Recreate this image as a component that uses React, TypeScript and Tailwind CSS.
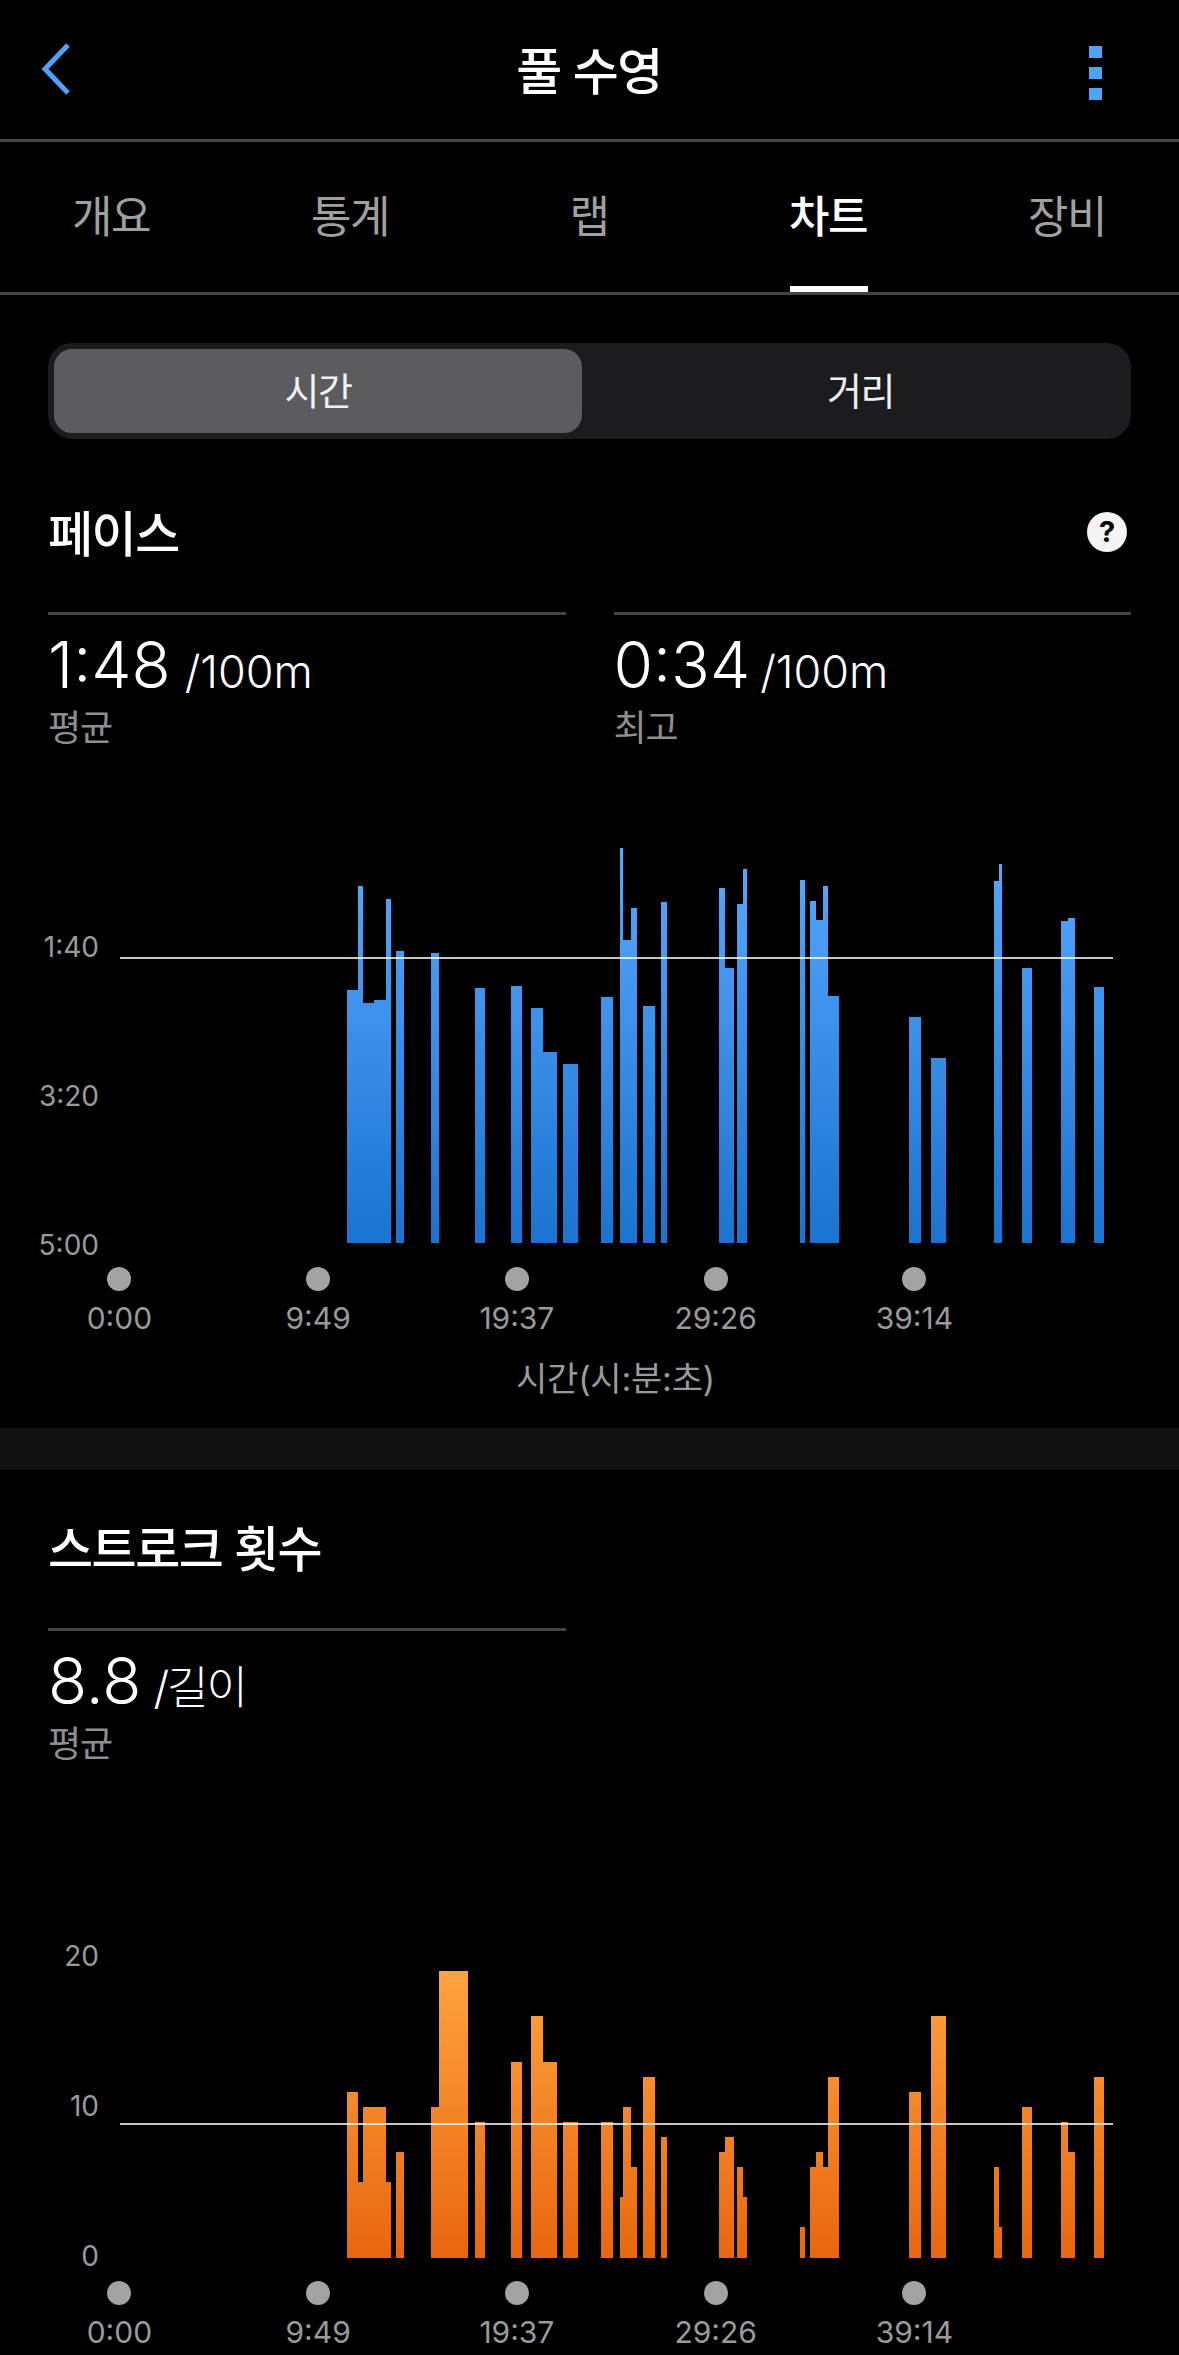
import React from "react";

const FONT = 'Inter, "Noto Sans CJK KR", sans-serif';

type Bar = [number, number, number];

const paceBars: Bar[] = [
  [347, 358, 480], [358, 363, 168], [363, 374, 519], [374, 386, 510], [386, 391, 207],
  [396, 404, 363], [431, 439, 369], [475, 485, 474], [511, 522, 468], [531, 543, 534],
  [543, 557, 666], [563, 578, 702], [601, 613, 501], [620, 623, 54], [623, 631, 330],
  [631, 637, 234], [643, 655, 528], [661, 667, 216], [719, 725, 174], [725, 734, 414],
  [737, 743, 222], [743, 747, 117], [800, 805, 150], [810, 816, 213], [816, 823, 270],
  [823, 828, 168], [828, 839, 498], [909, 921, 561], [931, 946, 684], [994, 999, 153],
  [999, 1002, 102], [1022, 1032, 414], [1061, 1068, 273], [1068, 1075, 264], [1094, 1104, 471],
];

const strokeBars: Bar[] = [
  [347, 358, 426], [358, 363, 696], [363, 386, 471], [386, 391, 696], [396, 404, 606],
  [431, 439, 471], [439, 468, 63], [475, 485, 516], [511, 522, 336], [531, 543, 198],
  [543, 557, 336], [563, 578, 516], [601, 613, 516], [620, 623, 741], [623, 631, 471],
  [631, 637, 651], [643, 655, 381], [661, 667, 561], [719, 725, 606], [725, 734, 561],
  [737, 743, 651], [743, 747, 741], [800, 805, 831], [810, 816, 651], [816, 823, 606],
  [823, 828, 651], [828, 839, 381], [909, 921, 426], [931, 946, 198], [994, 999, 651],
  [999, 1002, 831], [1022, 1032, 471], [1061, 1068, 516], [1068, 1075, 606], [1094, 1104, 381],
];

function BarChart({
  id, bars, originY, height, zeroZ, baseY, lineY, from, to, gradTop, gradBottom, labels, labelPad, labelGap,
}: {
  id: string; bars: Bar[]; originY: number; height: number; zeroZ: number; baseY: number; lineY: number;
  from: string; to: string; gradTop: number; gradBottom: number; labels: string[]; labelPad: string; labelGap: string;
}) {
  const left = 120;
  return (
    <div className="flex">
      <div className={`w-[120px] shrink-0 flex flex-col items-end pr-[21px] text-[28px] leading-[44px] text-[#9a9a9a] ${labelPad} ${labelGap}`}>
        {labels.map((l) => (
          <span key={l}>{l}</span>
        ))}
      </div>
      <svg width={1059} height={height} viewBox={`${left} ${originY} 1059 ${height}`} shapeRendering="crispEdges">
        <defs>
          <linearGradient id={id} gradientUnits="userSpaceOnUse" x1="0" x2="0" y1={gradTop} y2={gradBottom}>
            <stop offset="0" stopColor={from} />
            <stop offset="1" stopColor={to} />
          </linearGradient>
        </defs>
        {bars.map(([x0, x1, z]) => {
          const y = zeroZ + z / 3;
          return <rect key={`${x0}-${x1}`} x={x0} y={y} width={x1 - x0} height={baseY - y} fill={`url(#${id})`} />;
        })}
        <rect x={120} y={lineY} width={993} height={2} fill="#ffffff" fillOpacity={0.78} />
      </svg>
    </div>
  );
}

function XAxis({ title }: { title?: boolean }) {
  const ticks = ["0:00", "9:49", "19:37", "29:26", "39:14"];
  return (
    <div>
      <div className="flex pl-[20px]">
        {ticks.map((t) => (
          <div key={t} className="w-[198.75px] flex flex-col items-center">
            <div className="w-[24px] h-[24px] rounded-full bg-[#a3a3a3]" />
            <div className="mt-[7px] text-[30px] leading-[40px] text-[#9a9a9a]">{t}</div>
          </div>
        ))}
      </div>
      {title && (
        <div className="mt-[19px] pl-[516px] text-[34px] leading-[44px] text-[#9a9a9a] tracking-[-0.2px]">시간(시:분:초)</div>
      )}
    </div>
  );
}

function Stat({ value, unit, label, unitClass }: { value: string; unit: string; label: string; unitClass: string }) {
  return (
    <div className="w-[518px]">
      <div className="h-[3px] bg-[#454545]" />
      <div className="mt-[10px] flex items-baseline h-[80px] text-white">
        <span className="text-[64px] leading-[80px] font-light">{value}</span>
        <span className={`text-[45px] leading-[80px] font-light ${unitClass}`}>{unit}</span>
      </div>
      <div className="mt-[1px] text-[36px] leading-[44px] text-[#8e8e8e] tracking-[-1px]">{label}</div>
    </div>
  );
}

export default function App() {
  return (
    <div className="w-[1179px] h-[2355px] overflow-hidden bg-black text-white" style={{ fontFamily: FONT }}>
      <header className="h-[139px] flex items-center justify-between pl-[41px] pr-[77px]">
        <svg width="30" height="54" viewBox="0 0 30 54" fill="none" className="-mt-[2px]">
          <path d="M27 3 L4 27 L27 51" stroke="#4fa3f8" strokeWidth="5" strokeLinejoin="miter" />
        </svg>
        <h1 className="ml-[18px] text-[50px] leading-[60px] font-medium tracking-[-1.5px] mt-[5px]">풀 수영</h1>
        <div className="flex flex-col gap-[9px] mt-[7px]">
          <div className="w-[13px] h-[12px] bg-[#4fa3f8]" />
          <div className="w-[13px] h-[12px] bg-[#4fa3f8]" />
          <div className="w-[13px] h-[12px] bg-[#4fa3f8]" />
        </div>
      </header>
      <div className="h-[3px] bg-[#454545]" />

      <nav className="relative h-[150px] flex items-center pl-[16px] gap-[49px] text-[44px] leading-[56px] tracking-[-1.5px] text-[#a0a0a0]">
        <span className="w-[190px] text-center">개요</span>
        <span className="w-[190px] text-center">통계</span>
        <span className="w-[190px] text-center">랩</span>
        <span className="w-[190px] text-center font-medium text-white">차트</span>
        <span className="w-[190px] text-center">장비</span>
        <div className="absolute left-[790px] bottom-0 w-[78px] h-[6px] bg-white" />
      </nav>
      <div className="h-[3px] bg-[#454545]" />

      <div className="mt-[48px] mx-[48px] h-[96px] p-[6px] rounded-[24px] bg-[#1c1c20] flex text-[38px] leading-[84px] tracking-[-1.5px] text-[#f0f0f0]">
        <div className="w-[528px] rounded-[18px] bg-[#5b5b60] text-center">시간</div>
        <div className="flex-1 text-center pl-[14px]">거리</div>
      </div>

      <section className="h-[923px]">
        <div className="mt-[66px] pl-[48px] pr-[52px] flex items-center justify-between h-[60px]">
          <h2 className="text-[49px] leading-[60px] font-medium tracking-[-1.5px]">페이스</h2>
          <div className="-mt-[6px] w-[40px] h-[40px] rounded-full bg-[#f4f4f4] text-black text-[29px] leading-[40px] font-bold text-center">?</div>
        </div>
        <div className="mt-[47px] px-[48px] flex gap-[48px]">
          <Stat value="1:48" unit="/100m" label="평균" unitClass="ml-[14px]" />
          <Stat value="0:34" unit="/100m" label="최고" unitClass="ml-[10px]" />
        </div>
        <div className="mt-[90px]">
          <BarChart
            id="paceGrad"
            bars={paceBars}
            originY={840}
            height={410}
            zeroZ={830}
            baseY={1243}
            lineY={957}
            from="#58a8fe"
            to="#1a73d0"
            gradTop={848}
            gradBottom={1243}
            labels={["1:40", "3:20", "5:00"]}
            labelPad="pt-[85px]"
            labelGap="gap-[105px]"
          />
          <XAxis title />
        </div>
      </section>

      <div className="h-[42px] bg-[#121212]" />

      <section>
        <div className="mt-[50px] pl-[48px] h-[60px]">
          <h2 className="text-[49px] leading-[60px] font-medium tracking-[-1.5px]">스트로크 횟수</h2>
        </div>
        <div className="mt-[48px] px-[48px] flex gap-[48px]">
          <Stat value="8.8" unit="/길이" label="평균" unitClass="ml-[12px] tracking-[-2px]" />
        </div>
        <div className="mt-[159px]">
          <BarChart
            id="strokeGrad"
            bars={strokeBars}
            originY={1925}
            height={340}
            zeroZ={1950}
            baseY={2258}
            lineY={2123}
            from="#ffa33e"
            to="#e8660e"
            gradTop={1971}
            gradBottom={2258}
            labels={["20", "10", "0"]}
            labelPad="pt-[9px]"
            labelGap="gap-[106px]"
          />
          <div className="mt-[3px]">
            <XAxis />
          </div>
        </div>
      </section>
    </div>
  );
}
